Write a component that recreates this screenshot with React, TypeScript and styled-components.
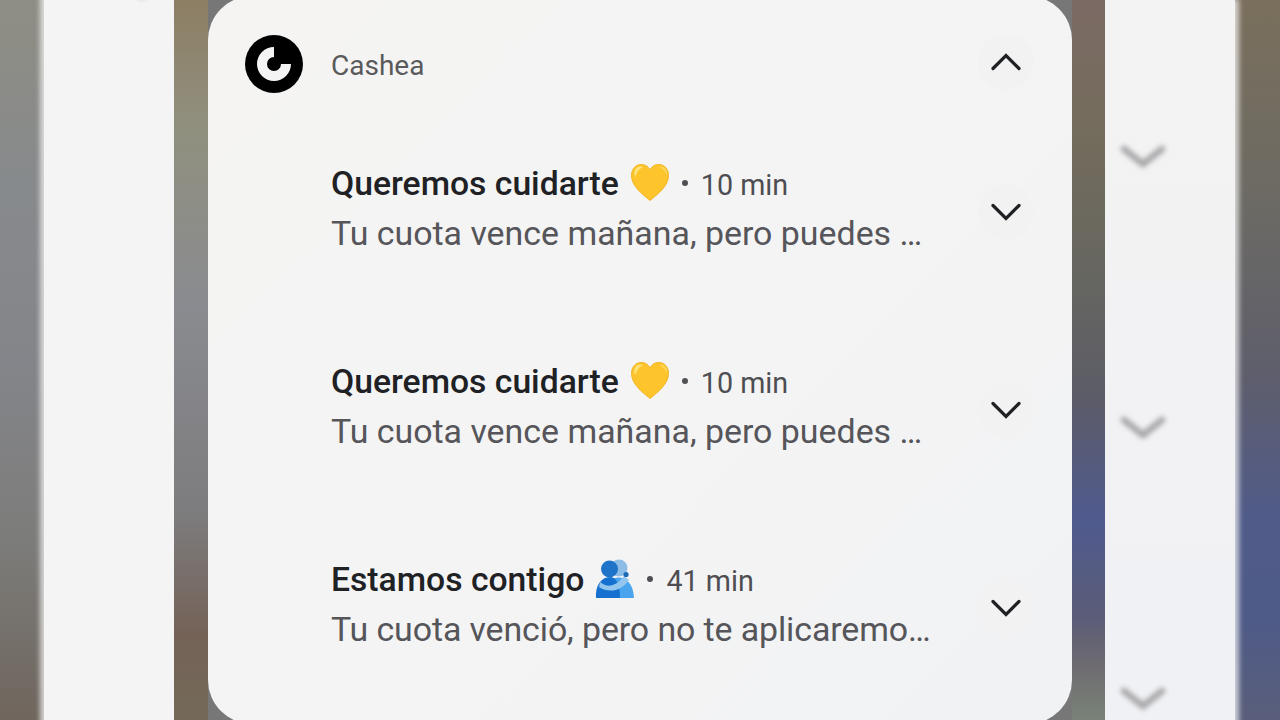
import React from 'react'
import styled, { createGlobalStyle } from 'styled-components'

const GlobalStyle = createGlobalStyle`
  html, body {
    margin: 0;
    padding: 0;
    width: 1280px;
    height: 720px;
    overflow: hidden;
    background: #777;
    font-family: Roboto, "Noto Sans", sans-serif;
  }
`

const Stage = styled.div`
  display: grid;
  grid-template-columns: 44px 130px 34px 864px 33px 130px 45px;
  width: 1280px;
  height: 720px;
  overflow: hidden;
`

const LEFT_OUTER = 'linear-gradient(180deg, #8f8e84 0%, #878a8c 25%, #84858a 50%, #7c7c7a 75%, #6f655c 100%)'
const LEFT_INNER = 'linear-gradient(180deg, #8d7e64 0%, #90907f 18%, #8a8b90 42%, #7d7d7f 70%, #746257 88%, #746a58 100%)'
const RIGHT_INNER = 'linear-gradient(180deg, #7b6a64 0%, #746c5c 18%, #666660 38%, #5c5c68 55%, #4f5a8e 72%, #5a5c78 85%, #6e6b70 92%, #7a8578 100%)'
const RIGHT_OUTER = 'linear-gradient(180deg, #7a6f5c 0%, #6c6a64 28%, #5e5e6c 52%, #505b8a 72%, #4e5a88 85%, #5a5f7a 100%)'

const Strip = styled.div<{ $fill: string }>`
  background: ${(p) => p.$fill};
`

const InnerStrip = styled(Strip)`
  position: relative;
  z-index: 1;
`

const Ghost = styled.div<{ $shadow: string }>`
  position: relative;
  display: flex;
  flex-direction: column;
  align-items: center;
  gap: 247px;
  background: #f4f4f4;
  box-shadow: ${(p) => p.$shadow} 0 5px 1px rgba(244, 244, 244, 0.75);
`

const GhostRight = styled(Ghost)`
  padding: 145px 54px 0 0;
  background: linear-gradient(180deg, #f3f3f3 0%, #f2f2f4 50%, #f0f1f5 100%);
`

const GhostLeft = styled(Ghost)`
  padding-left: 66px;
  margin-top: -24px;
`

const GhostChevron = styled.svg`
  display: block;
  width: 48px;
  height: 24px;
  filter: blur(2.4px);
`

const Card = styled.main`
  display: flex;
  flex-direction: column;
  height: 728px;
  margin-top: -4px;
  border-radius: 44px;
  background: linear-gradient(135deg, #f5f4f3 0%, #f4f4f4 50%, #f1f2f4 100%);
`

const AppHeader = styled.header`
  display: flex;
  align-items: center;
  height: 64px;
  margin-top: 36px;
  padding: 0 38.5px 0 37px;
`

const LogoMark = styled.svg`
  display: block;
  width: 58px;
  height: 58px;
  flex: none;
`

const AppName = styled.span`
  flex: 1;
  margin: 4px 0 0 28px;
  font-size: 28px;
  line-height: 36px;
  color: #5a5a5c;
`

const RoundButton = styled.div`
  display: flex;
  align-items: center;
  justify-content: center;
  flex: none;
  width: 56px;
  height: 56px;
  border-radius: 50%;
  background: #f2f2f2;
`

const CollapseButton = styled(RoundButton)`
  margin-top: -5px;
`

const ExpandButton = styled(RoundButton)`
  margin-top: 6px;
`

const Chevron = styled.svg<{ $up?: boolean }>`
  display: block;
  width: 32px;
  height: 20px;
  transform: ${(p) => (p.$up ? 'scaleY(-1)' : 'none')};
`

const List = styled.div`
  display: flex;
  flex-direction: column;
  gap: 98px;
  margin-top: 63px;
`

const Row = styled.article`
  display: flex;
  align-items: center;
  height: 100px;
  padding: 0 38.5px 0 123px;
`

const RowBody = styled.div`
  flex: 1;
  min-width: 0;
`

const TitleLine = styled.div`
  display: flex;
  align-items: center;
  height: 50px;
  margin-top: -1px;
  margin-bottom: 1px;
  white-space: nowrap;
`

const Title = styled.span`
  font-size: 33.7px;
  font-weight: 500;
  color: #202124;
`

const Emoji = styled.svg`
  display: block;
  flex: none;
  width: 40px;
  height: 40px;
  margin-left: 11px;
`

const Dot = styled.span`
  flex: none;
  width: 6px;
  height: 6px;
  margin: 0 13px 0 12px;
  border-radius: 50%;
  background: #505054;
`

const Time = styled.span`
  margin-top: 3px;
  font-size: 28.7px;
  color: #4e4e52;
`

const Message = styled.div<{ $tracking: number }>`
  width: 620px;
  height: 50px;
  overflow: hidden;
  font-size: 33.9px;
  letter-spacing: ${(p) => p.$tracking}px;
  line-height: 50px;
  white-space: nowrap;
  color: #55555a;
`

const chevronPath = 'M3 3.5 L16 16.5 L29 3.5'

const DownChevron = () => (
  <Chevron viewBox="0 0 32 20" fill="none" stroke="#202124" strokeWidth="3.2" strokeLinecap="round">
    <path d={chevronPath} />
  </Chevron>
)

const BlurChevron = () => (
  <GhostChevron viewBox="0 0 48 24" fill="none" stroke="#a6a6a8" strokeWidth="6.5" strokeLinecap="round">
    <path d="M5 4 L24 19 L43 4" />
  </GhostChevron>
)

const YellowHeart = () => (
  <Emoji viewBox="0 0 40 40">
    <path
      d="M20 37.5 C12 31 1.5 23 1.5 12.5 C1.5 5.5 6 1.5 11 1.5 C15 1.5 18 3 20 7 C22 3 25 1.5 29 1.5 C34 1.5 38.5 5.5 38.5 12.5 C38.5 23 28 31 20 37.5 Z"
      fill="#fdc42b"
      stroke="#f2b62a"
      strokeWidth="1"
    />
    <path d="M5 7 C7 3 11 3 13 4.5 C10 5.5 7 8 5.5 14 C4 12 4 9 5 7 Z" fill="#fee27a" />
    <path d="M29 3.5 C34 3 37.5 7 37 12 C35.5 8.5 33 5.5 29 3.5 Z" fill="#fed95f" />
  </Emoji>
)

const PeopleHugging = () => (
  <Emoji viewBox="0 0 40 40">
    <circle cx="24" cy="9" r="8.5" fill="#8dbde6" />
    <path d="M14 22 C22 15 38 17 39 39 L12 39 Z" fill="#4ba5ee" />
    <circle cx="14.5" cy="10" r="8.5" fill="#1f73c9" />
    <path d="M1 39 C0 27 6 18 15 18 C21 18 25 25 25 39 Z" fill="#1670cf" />
    <path d="M5 23 C12 29 21 28 29 17 L34 21 C26 33 13 34 4 28 Z" fill="#93c6ef" />
    <circle cx="31" cy="15.5" r="2.6" fill="#1a68b8" />
  </Emoji>
)

const notifications = [
  { title: 'Queremos cuidarte', emoji: <YellowHeart />, time: '10 min', text: 'Tu cuota vence mañana, pero puedes …', tracking: 0 },
  { title: 'Queremos cuidarte', emoji: <YellowHeart />, time: '10 min', text: 'Tu cuota vence mañana, pero puedes …', tracking: 0 },
  { title: 'Estamos contigo', emoji: <PeopleHugging />, time: '41 min', text: 'Tu cuota venció, pero no te aplicaremo…', tracking: -0.1 },
]

export default function App() {
  return (
    <>
      <GlobalStyle />
      <Stage>
        <Strip $fill={LEFT_OUTER} />
        <GhostLeft $shadow="-3px">
          <BlurChevron />
        </GhostLeft>
        <InnerStrip $fill={LEFT_INNER} />
        <Card>
          <AppHeader>
            <LogoMark viewBox="0 0 58 58">
              <circle cx="29" cy="29" r="29" fill="#000" />
              <path d="M29 12 A17 17 0 1 0 46 29 L36 29 A7 7 0 1 1 29 22 Z" fill="#f4f4f4" />
            </LogoMark>
            <AppName>Cashea</AppName>
            <CollapseButton>
              <Chevron $up viewBox="0 0 32 20" fill="none" stroke="#202124" strokeWidth="3.2" strokeLinecap="round">
                <path d={chevronPath} />
              </Chevron>
            </CollapseButton>
          </AppHeader>
          <List>
            {notifications.map((n, i) => (
              <Row key={i}>
                <RowBody>
                  <TitleLine>
                    <Title>{n.title}</Title>
                    {n.emoji}
                    <Dot />
                    <Time>{n.time}</Time>
                  </TitleLine>
                  <Message $tracking={n.tracking}>{n.text}</Message>
                </RowBody>
                <ExpandButton>
                  <DownChevron />
                </ExpandButton>
              </Row>
            ))}
          </List>
        </Card>
        <InnerStrip $fill={RIGHT_INNER} />
        <GhostRight $shadow="3px">
          <BlurChevron />
          <BlurChevron />
          <BlurChevron />
        </GhostRight>
        <Strip $fill={RIGHT_OUTER} />
      </Stage>
    </>
  )
}
